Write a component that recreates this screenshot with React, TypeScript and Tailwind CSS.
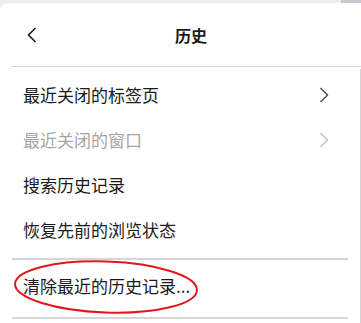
const font = { fontFamily: '"Noto Sans CJK SC", "Microsoft YaHei", sans-serif' }

function ChevronLeft() {
  return (
    <svg width="10" height="16" viewBox="0 0 10 16" fill="none">
      <path d="M8.5 1 L1.5 8 L8.5 15" stroke="#1b1b1b" strokeWidth="1.6" />
    </svg>
  )
}

function ChevronRight({ color }: { color: string }) {
  return (
    <svg width="10" height="16" viewBox="0 0 10 16" fill="none">
      <path d="M1.5 1 L8.5 8 L1.5 15" stroke={color} strokeWidth="1.5" />
    </svg>
  )
}

// 菜单项
const items = [
  { label: '最近关闭的标签页', arrow: true, disabled: false },
  { label: '最近关闭的窗口', arrow: true, disabled: true },
  { label: '搜索历史记录', arrow: false, disabled: false },
  { label: '恢复先前的浏览状态', arrow: false, disabled: false },
]

export default function App() {
  return (
    <div className="w-[361px] h-[323px] bg-[#f0f0f2] overflow-hidden flex flex-col" style={font}>
      {/* 顶部窗口边 */}
      <div className="h-[3px] flex shrink-0">
        <div className="flex-1 bg-[#eeeef0]" />
        <div className="w-[20px] bg-[#c9c9cd]" />
      </div>

      <div className="flex-1 bg-white rounded-tl-[8px] flex flex-col">
        {/* 标题 */}
        <div className="h-[63px] flex items-center shrink-0">
          <div className="ml-[27px] w-[10px] flex items-center">
            <ChevronLeft />
          </div>
          <div className="flex-1 pr-[16px] text-center text-[16px] font-bold text-[#1b1b1b] leading-none">
            历史
          </div>
        </div>
        <div className="ml-[12px] h-px bg-[#d4d4d4] shrink-0" />

        <div className="flex-1 flex flex-col border-r border-[#d4d4d4] mt-[2px]">
          <div className="pt-[3px] flex flex-col">
            {items.map((it) => (
              <div
                key={it.label}
                className={`h-[45px] flex items-center pl-[23px] pr-[31px] text-[17px] leading-none ${
                  it.disabled ? 'text-[#a6a6a6]' : 'text-[#1b1b1b]'
                }`}
              >
                <span className="flex-1">{it.label}</span>
                {it.arrow && <ChevronRight color={it.disabled ? '#c2c2c2' : '#505050'} />}
              </div>
            ))}
          </div>

          <div className="ml-[12px] mr-[12px] h-[2px] bg-[#d6d6d6] mt-[6px]" />

          <div className="relative h-[57px] pb-[6px] flex items-center pl-[23px] text-[17px] leading-none text-[#1b1b1b]">
            清除最近的历史记录...
            {/* 红色圈注 */}
            <svg
              className="absolute left-[12px] top-[-2px]"
              width="190"
              height="58"
              viewBox="0 0 190 58"
              fill="none"
            >
              <ellipse
                cx="94"
                cy="29"
                rx="91"
                ry="25.5"
                stroke="#e1171d"
                strokeWidth="2"
                transform="rotate(2 94 29)"
              />
            </svg>
          </div>

          <div className="ml-[12px] mr-[12px] h-[2px] bg-[#d6d6d6]" />
        </div>
      </div>
    </div>
  )
}
